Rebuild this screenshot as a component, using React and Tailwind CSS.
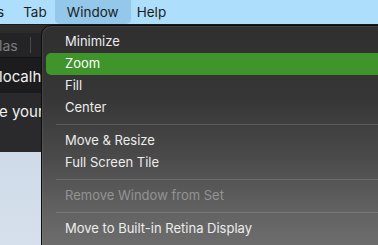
import React from "react";

const items = [
  { label: "Minimize" },
  { label: "Zoom", active: true },
  { label: "Fill" },
  { label: "Center" },
  { sep: true },
  { label: "Move & Resize" },
  { label: "Full Screen Tile" },
  { sep: true },
  { label: "Remove Window from Set", disabled: true },
  { sep: true },
  { label: "Move to Built-in Retina Display" },
  { sep: true },
];

const MenuBar = () => (
  <div className="flex h-6 items-center bg-[#addefb] text-[13.5px] text-[#1c1c1c]">
    <span className="-ml-[3px] pr-[19px]">s</span>
    <span className="pr-[8px]">Tab</span>
    <span className="flex h-6 w-[76px] items-center justify-center rounded-b-[5px] bg-[#93c8ea]">
      Window
    </span>
    <span className="pl-[6px]">Help</span>
  </div>
);

const Backdrop = () => (
  <div className="flex h-[221px] flex-col">
    <div className="h-px bg-[#1a1a1a]" />
    <div className="h-[8px] bg-[#2c2c2c]" />
    <div className="flex h-[24px] items-center bg-[#242427] text-[14px] text-[#7d7d80]">
      <span className="-ml-[1px]">las</span>
      <span className="ml-[12px] h-[16px] w-px bg-[#4a4a4d]" />
    </div>
    <div className="h-px bg-[#111]" />
    <div className="flex h-[35px] items-center bg-[#1c1c1e] text-[15px] text-[#f0f0f0]">
      <span className="-ml-[1px] pt-[3px]">localh</span>
    </div>
    <div className="flex h-[59px] items-start bg-[#2a2a2c] pt-[8px] text-[15px] text-[#f0f0f0]">
      <span className="-ml-[1px]">e your</span>
    </div>
    <div className="flex-1 bg-gradient-to-b from-[#cfdbe9] to-[#d6e0ec]" />
  </div>
);

const Dropdown = () => (
  <div className="absolute left-[41px] top-[25px] h-[240px] w-[360px] rounded-tl-[10px] border border-[#0d0d0d] bg-[linear-gradient(to_bottom,#2f2f2f_0%,#363636_30%,#4a4a4a_55%,#626262_78%,#737373_100%)] pl-[4px] pt-[5px] shadow-[inset_1px_1px_0_rgba(255,255,255,0.08)]">
    {items.map((it, i) =>
      it.sep ? (
        <div key={i} className="flex h-[11px] items-center pl-[10px]">
          <div className="h-px w-full bg-white/15" />
        </div>
      ) : (
        <div
          key={i}
          className={
            "flex h-[22px] items-center pl-[19px] text-[13px] " +
            (it.active
              ? "rounded-l-[5px] bg-[#3f942c] text-white"
              : it.disabled
              ? "text-white/35"
              : "text-[#ececec]")
          }
        >
          {it.label}
        </div>
      )
    )}
  </div>
);

export default function App() {
  return (
    <div
      className="relative h-[245px] w-[378px] overflow-hidden bg-[#cfdbe9]"
      style={{ fontFamily: "Inter, 'Noto Sans', sans-serif" }}
    >
      <MenuBar />
      <Backdrop />
      <Dropdown />
    </div>
  );
}
